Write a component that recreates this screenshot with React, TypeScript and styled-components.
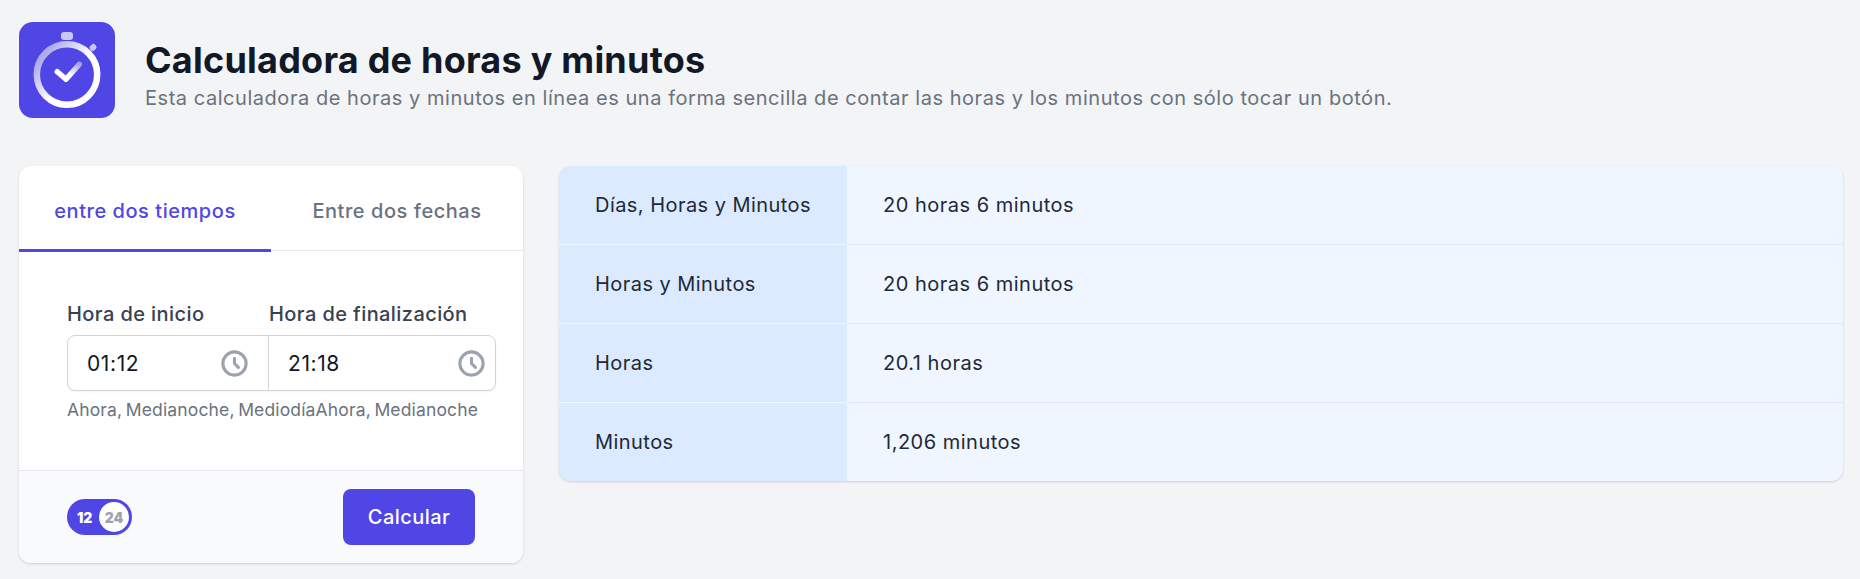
import React from "react";
import styled, { createGlobalStyle } from "styled-components";

const Global = createGlobalStyle`
  html, body { margin: 0; padding: 0; background: #f3f4f6; }
  body { font-family: Inter, "Liberation Sans", sans-serif; color: #111827; }
`;

const Page = styled.div`
  width: 1860px;
  height: 579px;
  box-sizing: border-box;
  padding: 22px 17px 0 19px;
  overflow: hidden;
`;

const Header = styled.header`
  display: flex;
  align-items: center;
  gap: 30px;
  height: 96px;
  margin-bottom: 48px;
`;

const HeaderText = styled.div`
  display: flex;
  flex-direction: column;
  gap: 4px;
  padding-top: 11px;
`;

const Title = styled.h1`
  margin: 0;
  font-size: 36px;
  line-height: 40px;
  font-weight: 700;
  letter-spacing: 0.23px;
  color: #111827;
`;

const Subtitle = styled.p`
  margin: 0;
  font-size: 20px;
  line-height: 28px;
  letter-spacing: 0.54px;
  color: #6b7280;
`;

const Columns = styled.main`
  display: grid;
  grid-template-columns: 504px 1fr;
  gap: 36px;
  align-items: start;
`;

const Card = styled.section`
  background: #fff;
  border-radius: 12px;
  box-shadow: 0 1px 3px rgba(0, 0, 0, 0.1), 0 1px 2px rgba(0, 0, 0, 0.06);
  overflow: hidden;
`;

const Tabs = styled.div`
  display: grid;
  grid-template-columns: 252px 252px;
  box-sizing: border-box;
  border-bottom: 1px solid #e5e7eb;
  height: 85px;
`;

const Tab = styled.div<{ $active?: boolean }>`
  display: flex;
  align-items: center;
  justify-content: center;
  height: 86px;
  box-sizing: border-box;
  padding-top: 6px;
  font-size: 20px;
  font-weight: 500;
  letter-spacing: 0.55px;
  color: ${(p) => (p.$active ? "#4f46e5" : "#6b7280")};
  border-bottom: 3px solid ${(p) => (p.$active ? "#4f46e5" : "transparent")};
`;

const Form = styled.div`
  padding: 49px 27px 0 48px;
  height: 219px;
  box-sizing: border-box;
`;

const Labels = styled.div`
  display: grid;
  grid-template-columns: 202px 1fr;
  font-size: 20px;
  line-height: 28px;
  font-weight: 500;
  letter-spacing: 0.42px;
  color: #374151;
  margin-bottom: 7px;
`;

const InputGroup = styled.div`
  display: grid;
  grid-template-columns: 200px 1fr;
  height: 56px;
  box-sizing: border-box;
  background: #fff;
  border: 1px solid #d1d5db;
  border-radius: 8px;
  box-shadow: 0 1px 2px rgba(0, 0, 0, 0.05);
`;

const TimeField = styled.div<{ $divided?: boolean }>`
  display: flex;
  align-items: center;
  justify-content: space-between;
  padding: 0 ${(p) => (p.$divided ? "8px" : "18px")} 0 19px;
  font-size: 21px;
  letter-spacing: 0.6px;
  color: #111827;
  ${(p) => (p.$divided ? "border-left: 1px solid #d1d5db;" : "")}
`;

const Hints = styled.div`
  display: flex;
  margin-top: 7px;
  font-size: 17.5px;
  line-height: 24px;
  letter-spacing: 0.15px;
  color: #6b7280;
  white-space: nowrap;
`;

const HintLink = styled.span<{ $comma?: boolean }>`
  margin-right: ${(p) => (p.$comma ? "3.5px" : "0")};
`;

const Footer = styled.div`
  display: flex;
  align-items: center;
  justify-content: space-between;
  height: 93px;
  box-sizing: border-box;
  padding: 0 48px;
  background: #f9fafb;
  border-top: 1px solid #e5e7eb;
`;

const Toggle = styled.div`
  position: relative;
  display: flex;
  align-items: center;
  width: 65px;
  height: 36px;
  border-radius: 18px;
  background: #4f46e5;
  font-size: 14px;
  font-weight: 900;
  color: #fff;
  padding-left: 10px;
  box-sizing: border-box;
`;

const Knob = styled.span`
  position: absolute;
  right: 3px;
  top: 3px;
  width: 30px;
  height: 30px;
  border-radius: 50%;
  background: #fff;
  display: flex;
  align-items: center;
  justify-content: center;
  color: #9ca3af;
`;

const Button = styled.button`
  width: 132px;
  height: 56px;
  border: 0;
  border-radius: 8px;
  background: #4f46e5;
  color: #fff;
  font-family: inherit;
  font-size: 20px;
  font-weight: 500;
  letter-spacing: 0.45px;
`;

const ResultTable = styled.section`
  background: #eff6ff;
  border-radius: 12px;
  box-shadow: 0 1px 3px rgba(0, 0, 0, 0.1), 0 1px 2px rgba(0, 0, 0, 0.06);
  overflow: hidden;
`;

const KeyCell = styled.div`
  display: flex;
  align-items: center;
  box-sizing: border-box;
  padding: 0 0 1px 36px;
  background: #dbeafe;
  border-bottom: 1px solid #eff6ff;
  font-size: 20px;
  letter-spacing: 0.45px;
  color: #1f2937;
`;

const ValueCell = styled.div`
  display: flex;
  align-items: center;
  box-sizing: border-box;
  padding: 0 0 1px 36px;
  border-bottom: 1px solid #dbeafe;
  font-size: 20px;
  letter-spacing: 0.5px;
  color: #1f2937;
`;

const Row = styled.div`
  display: grid;
  grid-template-columns: 288px 1fr;
  height: 79px;

  &:last-child {
    height: 78px;
  }
  &:last-child > div {
    border-bottom: 0;
  }
`;

const ClockIcon = () => (
  <svg width="31" height="31" viewBox="0 0 24 24" fill="none" stroke="#9ca3af" strokeWidth="2.4" strokeLinecap="round" strokeLinejoin="round">
    <path d="M12 8v4l3 3m6-3a9 9 0 11-18 0 9 9 0 0118 0z" />
  </svg>
);

const Logo = () => (
  <svg width="96" height="96" viewBox="0 0 96 96">
    <defs>
      <linearGradient id="ring" x1="0.05" y1="0.25" x2="0.75" y2="0.85">
        <stop offset="0" stopColor="#aeaaec" />
        <stop offset="0.6" stopColor="#ffffff" />
        <stop offset="1" stopColor="#ffffff" />
      </linearGradient>
      <linearGradient id="tick" x1="1" y1="0" x2="0" y2="1">
        <stop offset="0" stopColor="#a5a1ec" />
        <stop offset="0.55" stopColor="#ffffff" />
      </linearGradient>
    </defs>
    <rect width="96" height="96" rx="14" fill="#4f46e5" />
    <rect x="42" y="10" width="12" height="8" rx="3" fill="#c9c7f2" />
    <rect x="71" y="22" width="6" height="7" rx="2.5" fill="#c9c7f2" transform="rotate(45 74 25.5)" />
    <circle cx="48" cy="52.5" r="30.2" fill="none" stroke="url(#ring)" strokeWidth="6.5" />
    <path d="M38.3 49.7 L47 57.3 L60.3 42.3" fill="none" stroke="url(#tick)" strokeWidth="5.5" strokeLinecap="round" strokeLinejoin="round" />
  </svg>
);

export default function App() {
  return (
    <>
      <Global />
      <Page>
        <Header>
          <Logo />
          <HeaderText>
            <Title>Calculadora de horas y minutos</Title>
            <Subtitle>
              Esta calculadora de horas y minutos en línea es una forma sencilla de contar las horas y los minutos con sólo tocar un botón.
            </Subtitle>
          </HeaderText>
        </Header>
        <Columns>
          <Card>
            <Tabs>
              <Tab $active>entre dos tiempos</Tab>
              <Tab>Entre dos fechas</Tab>
            </Tabs>
            <Form>
              <Labels>
                <span>Hora de inicio</span>
                <span>Hora de finalización</span>
              </Labels>
              <InputGroup>
                <TimeField>
                  01:12
                  <ClockIcon />
                </TimeField>
                <TimeField $divided>
                  21:18
                  <ClockIcon />
                </TimeField>
              </InputGroup>
              <Hints>
                <HintLink $comma>Ahora,</HintLink>
                <HintLink $comma>Medianoche,</HintLink>
                <HintLink>Mediodía</HintLink>
                <HintLink $comma>Ahora,</HintLink>
                <HintLink>Medianoche</HintLink>
              </Hints>
            </Form>
            <Footer>
              <Toggle>
                12
                <Knob>24</Knob>
              </Toggle>
              <Button>Calcular</Button>
            </Footer>
          </Card>
          <ResultTable>
            <Row>
              <KeyCell>Días, Horas y Minutos</KeyCell>
              <ValueCell>20 horas 6 minutos</ValueCell>
            </Row>
            <Row>
              <KeyCell>Horas y Minutos</KeyCell>
              <ValueCell>20 horas 6 minutos</ValueCell>
            </Row>
            <Row>
              <KeyCell>Horas</KeyCell>
              <ValueCell>20.1 horas</ValueCell>
            </Row>
            <Row>
              <KeyCell>Minutos</KeyCell>
              <ValueCell>1,206 minutos</ValueCell>
            </Row>
          </ResultTable>
        </Columns>
      </Page>
    </>
  );
}
